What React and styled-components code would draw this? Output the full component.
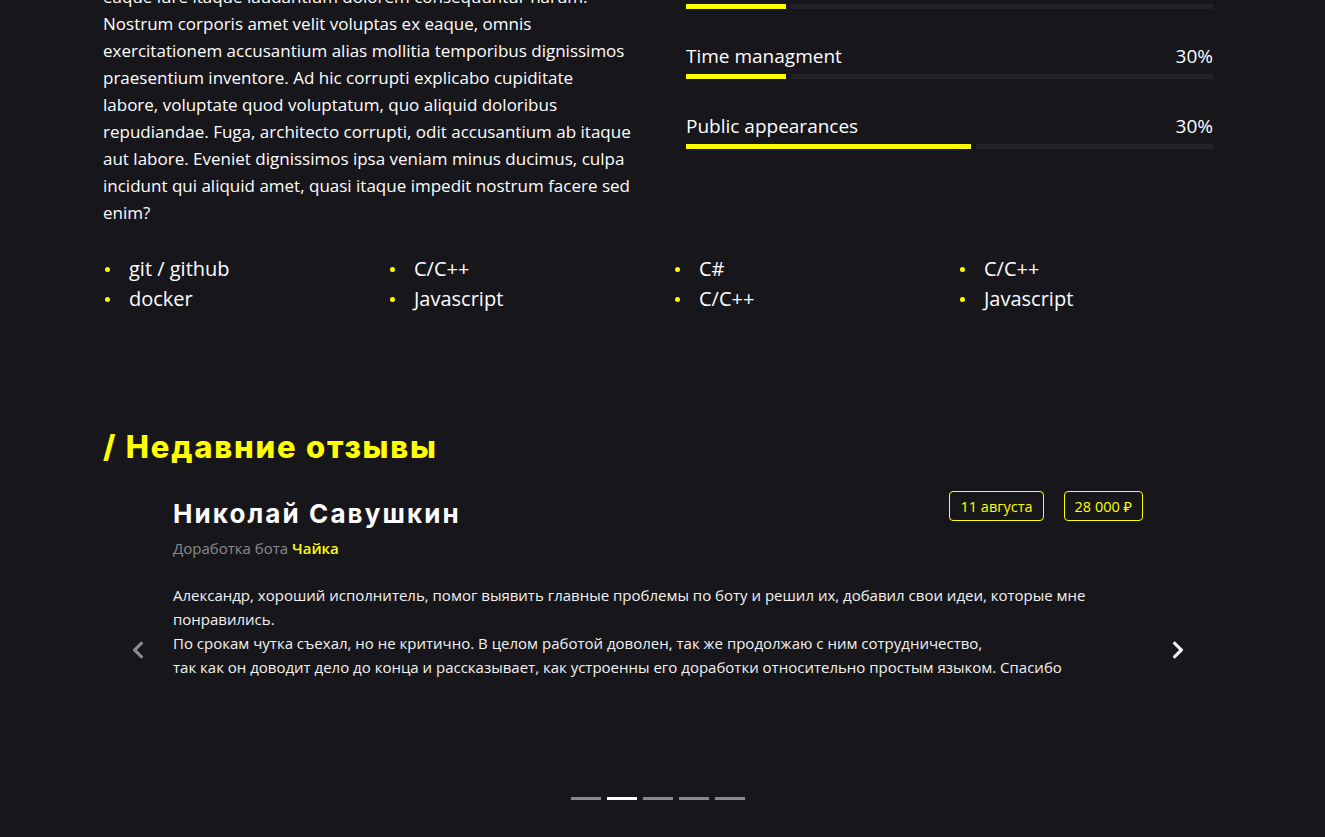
import styled, { createGlobalStyle } from "styled-components";
import { FaChevronLeft, FaChevronRight } from "react-icons/fa";

const GlobalStyle = createGlobalStyle`
  html, body {
    margin: 0;
    padding: 0;
    background: #17161b;
    overflow: hidden;
  }
  body {
    font-family: "Open Sans", "Noto Sans", sans-serif;
    color: #ffffff;
  }
`;

const Page = styled.div`
  width: 1325px;
  height: 837px;
  overflow: hidden;
  background: #17161b;
`;

const Container = styled.div`
  width: 1110px;
  margin-left: 103px;
`;

const AboutRow = styled.section`
  display: grid;
  grid-template-columns: 530px 527px;
  column-gap: 53px;
  margin-top: -27px;
`;

const AboutText = styled.p`
  width: 528.5px;
  margin: 10px 0 0;
  font-size: 17px;
  line-height: 27px;
  color: #ffffff;
`;

const Skills = styled.div`
  display: flex;
  flex-direction: column;
`;

const Skill = styled.div`
  margin-bottom: 34px;
`;

const SkillHead = styled.div`
  display: flex;
  justify-content: space-between;
  font-size: 19px;
  line-height: 27px;
`;

const Bar = styled.div`
  display: flex;
  gap: 5px;
  height: 5px;
  margin-top: 4px;
`;

const Fill = styled.div`
  background: #ffff00;
  height: 100%;
`;

const Track = styled.div`
  flex: 1;
  background: #232228;
  height: 100%;
`;

const StackGrid = styled.div`
  display: grid;
  grid-template-columns: repeat(4, 285px);
  margin-top: 28px;
`;

const StackList = styled.ul`
  margin: 0;
  padding: 0;
  list-style: none;
`;

const StackItem = styled.li`
  position: relative;
  padding-left: 26px;
  font-size: 20px;
  line-height: 30px;

  &::before {
    content: "";
    position: absolute;
    left: 2px;
    top: 13px;
    width: 5px;
    height: 5px;
    border-radius: 50%;
    background: #ffff00;
  }
`;

const SectionTitle = styled.h2`
  margin: 114px 0 0;
  font-family: "Inter", "Noto Sans", sans-serif;
  font-weight: 800;
  font-size: 31px;
  line-height: 38px;
  letter-spacing: 1.8px;
  color: #ffff00;
`;

const Carousel = styled.div`
  position: relative;
  margin-top: 20px;
  height: 328px;
`;

const Slide = styled.article`
  padding: 5px 70px 0;
`;

const SlideHead = styled.div`
  display: flex;
  justify-content: space-between;
  align-items: flex-start;
`;

const Name = styled.h3`
  margin: 7px 0 0;
  font-family: "Inter", "Noto Sans", sans-serif;
  font-weight: 700;
  font-size: 26px;
  line-height: 32px;
  letter-spacing: 2.1px;
  color: #ffffff;
`;

const Badges = styled.div`
  display: flex;
  gap: 20px;
`;

const Badge = styled.span`
  display: inline-flex;
  align-items: center;
  height: 30px;
  box-sizing: border-box;
  padding: 0 10px;
  border: 1px solid #ffff00;
  border-radius: 4px;
  color: #ffff00;
  font-size: 14.5px;
`;

const Project = styled.div`
  margin-top: 7px;
  font-size: 15px;
  line-height: 22px;
  color: #8a8a8e;

  b {
    color: #ffff00;
    font-weight: 600;
  }
`;

const Review = styled.p`
  margin: 24px 0 0;
  font-size: 15px;
  line-height: 24px;
  color: #f2f2f2;
`;

const Control = styled.button`
  position: absolute;
  top: 0;
  bottom: 0;
  width: 70px;
  display: flex;
  align-items: center;
  justify-content: center;
  padding: 0;
  border: none;
  background: transparent;
  color: ${(p) => (p.$active ? "#f2f2f2" : "#8a8a8e")};
  font-size: 20px;
  cursor: pointer;
  ${(p) => (p.$side === "left" ? "left: 0;" : "right: 0;")}
`;

const Indicators = styled.div`
  position: absolute;
  left: 0;
  right: 0;
  bottom: 14px;
  display: flex;
  justify-content: center;
  gap: 6px;
`;

const Dot = styled.span`
  width: 30px;
  height: 3px;
  background: ${(p) => (p.$active ? "#ffffff" : "#8a8a8e")};
`;

const skills = [
  { name: "Teamwork", value: "30%", width: 100 },
  { name: "Time managment", value: "30%", width: 100 },
  { name: "Public appearances", value: "30%", width: 285 },
];

const stack = [
  ["git / github", "docker"],
  ["C/C++", "Javascript"],
  ["C#", "C/C++"],
  ["C/C++", "Javascript"],
];

function App() {
  return (
    <Page>
      <GlobalStyle />
      <Container>
        <AboutRow>
          <AboutText>
            eaque iure itaque laudantium dolorem consequuntur harum. Nostrum
            corporis amet velit voluptas ex eaque, omnis exercitationem
            accusantium alias mollitia temporibus dignissimos praesentium
            inventore. Ad hic corrupti explicabo cupiditate labore, voluptate
            quod voluptatum, quo aliquid doloribus repudiandae. Fuga, architecto
            corrupti, odit accusantium ab itaque aut labore. Eveniet dignissimos
            ipsa veniam minus ducimus, culpa incidunt qui aliquid amet, quasi
            itaque impedit nostrum facere sed enim?
          </AboutText>
          <Skills>
            {skills.map((s) => (
              <Skill key={s.name}>
                <SkillHead>
                  <span>{s.name}</span>
                  <span>{s.value}</span>
                </SkillHead>
                <Bar>
                  <Fill style={{ width: s.width }} />
                  <Track />
                </Bar>
              </Skill>
            ))}
          </Skills>
        </AboutRow>

        <StackGrid>
          {stack.map((col, i) => (
            <StackList key={i}>
              {col.map((item) => (
                <StackItem key={item}>{item}</StackItem>
              ))}
            </StackList>
          ))}
        </StackGrid>

        <SectionTitle>/ Недавние отзывы</SectionTitle>

        <Carousel>
          <Slide>
            <SlideHead>
              <div>
                <Name>Николай Савушкин</Name>
                <Project>
                  Доработка бота <b>Чайка</b>
                </Project>
              </div>
              <Badges>
                <Badge>11 августа</Badge>
                <Badge>28 000 ₽</Badge>
              </Badges>
            </SlideHead>
            <Review>
              Александр, хороший исполнитель, помог выявить главные проблемы по
              боту и решил их, добавил свои идеи, которые мне понравились.
              <br />
              По срокам чутка съехал, но не критично. В целом работой доволен,
              так же продолжаю с ним сотрудничество,
              <br />
              так как он доводит дело до конца и рассказывает, как устроенны его
              доработки относительно простым языком. Спасибо
            </Review>
          </Slide>
          <Control $side="left" aria-label="Previous">
            <FaChevronLeft />
          </Control>
          <Control $side="right" $active aria-label="Next">
            <FaChevronRight />
          </Control>
          <Indicators>
            {[0, 1, 2, 3, 4].map((i) => (
              <Dot key={i} $active={i === 1} />
            ))}
          </Indicators>
        </Carousel>
      </Container>
    </Page>
  );
}

export default App;
